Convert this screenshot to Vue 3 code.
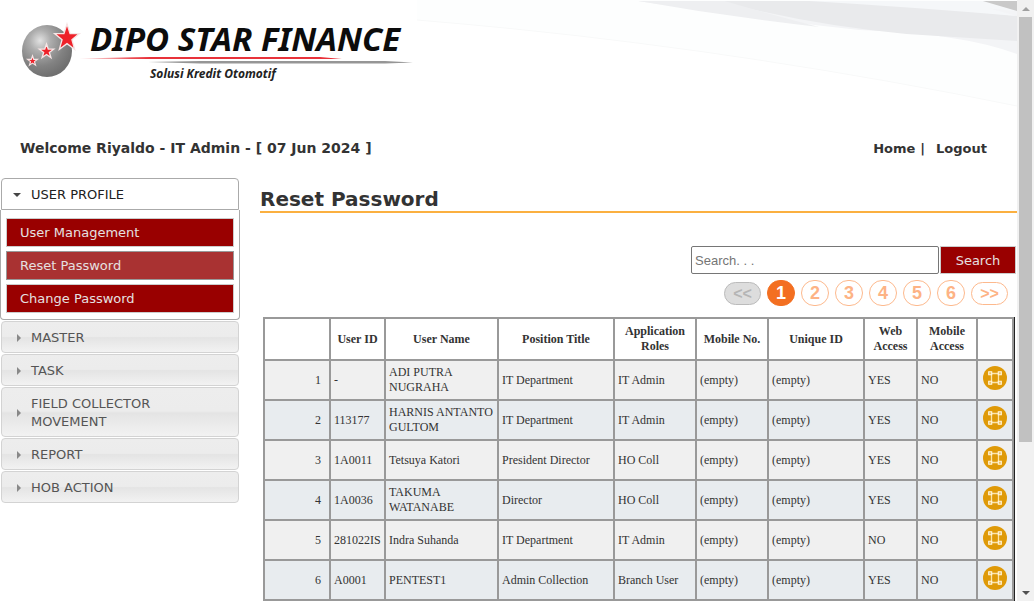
<script setup>
import { ref } from 'vue'

const search = ref('')
const profileLinks = [
  { label: 'User Management', active: false },
  { label: 'Reset Password', active: true },
  { label: 'Change Password', active: false },
]
const sections = ['MASTER', 'TASK', 'FIELD COLLECTOR MOVEMENT', 'REPORT', 'HOB ACTION']
const pages = [1, 2, 3, 4, 5, 6]
const current = ref(1)
const columns = [
  { key: 'no', label: '' },
  { key: 'id', label: 'User ID' },
  { key: 'name', label: 'User Name' },
  { key: 'title', label: 'Position Title' },
  { key: 'role', label: 'Application Roles' },
  { key: 'mobile', label: 'Mobile No.' },
  { key: 'unique', label: 'Unique ID' },
  { key: 'web', label: 'Web Access' },
  { key: 'app', label: 'Mobile Access' },
  { key: 'action', label: '' },
]
const rows = [
  ['-', 'ADI PUTRA NUGRAHA', 'IT Department', 'IT Admin', 'YES'],
  ['113177', 'HARNIS ANTANTO GULTOM', 'IT Department', 'IT Admin', 'YES'],
  ['1A0011', 'Tetsuya Katori', 'President Director', 'HO Coll', 'YES'],
  ['1A0036', 'TAKUMA WATANABE', 'Director', 'HO Coll', 'YES'],
  ['281022IS', 'Indra Suhanda', 'IT Department', 'IT Admin', 'NO'],
  ['A0001', 'PENTEST1', 'Admin Collection', 'Branch User', 'YES'],
].map(([id, name, title, role, web]) => ({ id, name, title, role, web }))
</script>

<template>
  <div class="frame">
    <div class="page">
      <svg class="swoosh" viewBox="0 0 597 120" preserveAspectRatio="none" aria-hidden="true">
        <path d="M0 0H597V106Q300 45 0 20Z" fill="#fdfefe" />
        <path d="M0 20Q300 45 597 106" fill="none" stroke="#f8f9f9" />
        <path d="M220 1H597V54Q540 33 440 30Q330 18 220 1Z" fill="#f3f4f6" />
        <path d="M300 1H450L597 16V41L487 34Q390 25 300 1Z" fill="#e9eaec" />
        <path d="M220 1H306Q350 14 400 27Q310 17 220 1Z" fill="#eeeff1" />
        <path d="M390 1H543L597 16Q490 7 390 1Z" fill="#f5f7f9" />
        <path d="M482 1H597V11Z" fill="#f5f7f9" />
        <path d="M563 1H597V11Z" fill="#c9c9c9" />
      </svg>

      <header class="header">
        <svg class="logo" width="420" height="90" viewBox="0 0 420 90" role="img" aria-label="Dipo Star Finance">
          <defs>
            <radialGradient id="ball" cx="0.36" cy="0.3" r="0.7">
              <stop offset="0" stop-color="#e2e2e2" />
              <stop offset="0.3" stop-color="#adadad" />
              <stop offset="0.7" stop-color="#828282" />
              <stop offset="1" stop-color="#707070" />
            </radialGradient>
            <linearGradient id="red" x1="0" x2="1">
              <stop offset="0" stop-color="#e8323a" stop-opacity="0.3" />
              <stop offset="0.2" stop-color="#e8323a" />
              <stop offset="1" stop-color="#e8323a" />
            </linearGradient>
            <path id="star" d="M0 -10L2.35 -3.24L9.51 -3.09L3.8 1.24L5.88 8.09L0 4L-5.88 8.09L-3.8 1.24L-9.51 -3.09L-2.35 -3.24Z" />
          </defs>
          <ellipse cx="47" cy="51" rx="25" ry="26" fill="url(#ball)" />
          <g fill="#ee2129" stroke="#f6e6e6">
            <use href="#star" transform="translate(67 38) scale(1.3 1.4)" stroke-width="1" />
            <use href="#star" transform="translate(46.5 51.5) scale(0.75)" stroke-width="1.8" />
            <use href="#star" transform="translate(32.5 61) scale(0.52)" stroke-width="2.2" />
          </g>
          <text class="brand" x="90" y="51">DIPO STAR FINANCE</text>
          <path d="M79 58.5L150 57H320L342 59H150Z" fill="url(#red)" />
          <path d="M148 62L200 61H385L413 62.5L385 63.5H200Z" fill="#969696" />
          <text class="tagline" x="150" y="78">Solusi Kredit Otomotif</text>
        </svg>
      </header>

      <div class="userbar">
        <span class="welcome">Welcome Riyaldo - IT Admin - [ 07 Jun 2024 ]</span>
        <nav class="session"><a href="#">Home</a><span>|</span><a href="#">Logout</a></nav>
      </div>

      <div class="body">
        <nav class="sidebar">
          <button class="section open" type="button" aria-expanded="true">
            <i class="caret down"></i><span>USER PROFILE</span>
          </button>
          <div class="submenu">
            <a v-for="l in profileLinks" :key="l.label" href="#" :class="{ active: l.active }">{{ l.label }}</a>
          </div>
          <button v-for="s in sections" :key="s" class="section" type="button" aria-expanded="false">
            <i class="caret"></i><span>{{ s }}</span>
          </button>
        </nav>

        <main class="main">
          <h1>Reset Password</h1>
          <form class="search" @submit.prevent>
            <input v-model="search" type="text" placeholder="Search. . ." aria-label="Search" />
            <button type="submit">Search</button>
          </form>
          <div class="pager">
            <button type="button" class="step" disabled>&lt;&lt;</button>
            <button v-for="p in pages" :key="p" type="button" :class="{ on: p === current }" @click="current = p">{{ p }}</button>
            <button type="button" class="step">&gt;&gt;</button>
          </div>
          <table>
            <colgroup><col v-for="c in columns" :key="c.key" :class="'c-' + c.key" /></colgroup>
            <thead>
              <tr><th v-for="c in columns" :key="c.key">{{ c.label }}</th></tr>
            </thead>
            <tbody>
              <tr v-for="(r, i) in rows" :key="r.id">
                <td class="num">{{ i + 1 }}</td>
                <td>{{ r.id }}</td>
                <td>{{ r.name }}</td>
                <td>{{ r.title }}</td>
                <td>{{ r.role }}</td>
                <td>(empty)</td>
                <td>(empty)</td>
                <td>{{ r.web }}</td>
                <td>NO</td>
                <td class="action">
                  <button type="button" :aria-label="'Reset password of ' + r.name">
                    <svg width="24" height="24" viewBox="0 0 24 24">
                      <circle cx="12" cy="12" r="12" fill="#df9a08" />
                      <path d="M8 7.5H16M8 16.5H16M8.5 8V16M15.5 8V16" fill="none" stroke="#fbe3ab" stroke-width="1.3" />
                      <path d="M5.7 5.7H8.7V8.7H5.7ZM15.3 5.7H18.3V8.7H15.3ZM5.7 15.3H8.7V18.3H5.7ZM15.3 15.3H18.3V18.3H15.3Z" fill="#efc25f" stroke="#fff6e0" stroke-width="1.1" />
                    </svg>
                  </button>
                </td>
              </tr>
            </tbody>
          </table>
        </main>
      </div>
    </div>

    <div class="scrollbar" aria-hidden="true">
      <i class="arrow up"></i>
      <div class="track"><div class="thumb"></div></div>
      <i class="arrow dn"></i>
    </div>
  </div>
</template>

<style>
body { margin: 0; background: #fff; }
</style>

<style scoped>
* { box-sizing: border-box; }
.frame {
  display: flex;
  height: 100vh;
  overflow: hidden;
  color: #333;
  font-family: Verdana, "DejaVu Sans", sans-serif;
  font-size: 13px;
}
.page { position: relative; flex: 1; min-width: 0; overflow: hidden; }
.swoosh { position: absolute; top: 0; right: 0; width: 59%; height: 120px; }
.header { position: relative; height: 140px; }
.logo { display: block; }
.brand { font: italic 700 33px "Noto Sans", sans-serif; fill: #0c0c0c; }
.tagline { font: italic 700 12px "Noto Sans", sans-serif; fill: #222; }
.userbar {
  display: flex;
  justify-content: space-between;
  align-items: baseline;
  height: 18px;
  padding: 0 30px 0 20px;
  font-weight: bold;
}
.welcome { font-size: 14px; }
.session { display: flex; gap: 5px; }
.session a { color: #333; text-decoration: none; }
.session span { margin-right: 6px; }
.body { display: flex; gap: 20px; padding-top: 20px; }
.sidebar { display: flex; flex-direction: column; gap: 1px; width: 240px; flex: none; }
.section {
  display: flex;
  align-items: center;
  margin: 0 1px;
  padding: 7px 12px 5px;
  border: 1px solid #d3d3d3;
  border-radius: 4px;
  background: linear-gradient(#ededed, #ececec 48%, #e4e4e4 52%, #f2f2f2);
  color: #555;
  font: 13px/18px Verdana, "DejaVu Sans", sans-serif;
  text-align: left;
}
.section.open { margin-bottom: -1px; border-color: #aaa; border-radius: 4px 4px 0 0; background: #fff; color: #212121; }
.caret { flex: none; width: 4px; margin: 0 10px 0 3px; border: solid transparent; border-width: 4px 0 4px 4px; border-left-color: #888; }
.caret.down { width: 8px; margin: 0 10px 0 -1px; border-width: 4px 4px 0; border-color: #454545 transparent transparent; }
.submenu {
  display: flex;
  flex-direction: column;
  gap: 4px;
  padding: 8px 5px 6px;
  border: 1px solid #aaa;
  border-top: 0;
  border-radius: 0 0 4px 4px;
}
.submenu a {
  height: 29px;
  padding: 0 13px;
  border: 1px solid #ccc;
  background: #900;
  color: #e6e0e0;
  line-height: 28px;
  text-decoration: none;
}
.submenu a.active { border-color: #999; background: #a93232; }
.main { flex: 1; min-width: 0; }
h1 { margin: 0; padding-top: 10px; border-bottom: 2px solid #fbb040; font-size: 20px; line-height: 23px; }
.search { display: flex; justify-content: flex-end; gap: 1px; padding: 33px 1px 0 0; }
.search input {
  width: 248px;
  height: 28px;
  padding: 0 3px;
  border: 1px solid #767676;
  border-radius: 2px;
  font: 13px "Liberation Sans", Arial, sans-serif;
}
.search input::placeholder { color: #757575; }
.search button {
  width: 76px;
  height: 28px;
  padding: 0;
  border: 1px solid #ccc;
  background: #900;
  color: #e6e0e0;
  font: 13px Verdana, "DejaVu Sans", sans-serif;
}
.pager { display: flex; justify-content: flex-end; align-items: center; gap: 6px; padding: 6px 9px 0 0; }
.pager button {
  width: 28px;
  height: 26px;
  padding: 0;
  border: 1px solid #fdb98d;
  border-radius: 13px;
  background: #fff;
  color: #fdb385;
  font: bold 18px/24px "Liberation Sans", Arial, sans-serif;
}
.pager button.on { border-color: #f36f21; background: #f36f21; color: #fff; }
.pager .step { width: 37px; height: 23px; font-size: 16px; line-height: 21px; }
.pager .step:disabled { border-color: #bbb; background: #ddd; color: #b5b5b5; }
table {
  width: calc(100% - 6px);
  margin: 11px 3px 0;
  border-collapse: collapse;
  table-layout: fixed;
  box-shadow: 1px 0 #222;
  font: 12px/15px "Liberation Serif", "Times New Roman", serif;
}
th, td { border: 2px solid #999; padding: 0 3px; text-align: left; }
th { height: 42px; background: #fff; text-align: center; }
td { height: 40px; background: #f0f0f0; }
tbody tr:nth-child(even) td { background: #e8ecef; }
td.num { padding-right: 8px; text-align: right; }
td.action { padding: 0; text-align: center; }
.action button { display: block; width: 24px; height: 24px; margin: -4px auto 0; padding: 0; border: 0; background: none; }
.action svg { display: block; }
.c-no { width: 66px; }
.c-id { width: 55px; }
.c-name { width: 113px; }
.c-title { width: 116px; }
.c-role { width: 82px; }
.c-mobile { width: 72px; }
.c-unique { width: 96px; }
.c-web { width: 53px; }
.c-app { width: 60px; }
.c-action { width: 36px; }
.scrollbar { display: flex; flex-direction: column; align-items: center; width: 17px; flex: none; background: #f1f1f1; }
.track { flex: 1; width: 13px; }
.thumb { height: 75%; background: #c1c1c1; }
.arrow { margin: 7px 0 6px; border: solid transparent; border-width: 0 4px 4px; border-bottom-color: #a0a0a0; }
.arrow.dn { border-width: 4px 4px 0; border-color: #505050 transparent transparent; }
</style>
